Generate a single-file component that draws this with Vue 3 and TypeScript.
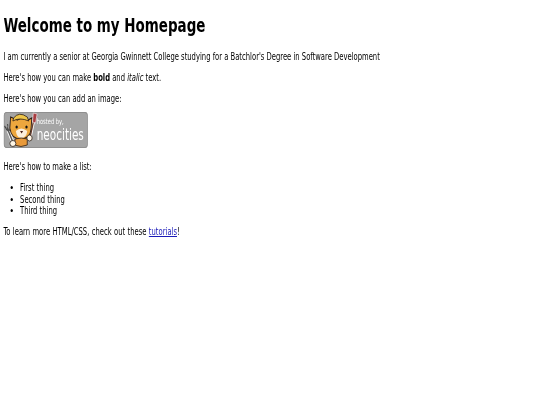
<script setup lang="ts">
const items: string[] = ['First thing', 'Second thing', 'Third thing']
</script>

<template>
  <main class="page">
    <h1>Welcome to my Homepage</h1>
    <p>I am currently a senior at Georgia Gwinnett College studying for a Batchlor's Degree in Software Development</p>
    <p>Here's how you can make <strong>bold</strong> and <em>italic</em> text.</p>
    <p>Here's how you can add an image:</p>
    <div class="badge">
      <svg class="cat" viewBox="0 0 52 36" width="52" height="36" aria-hidden="true">
        <path d="M41 3 L34 28" stroke="#fff" stroke-width="4" fill="none" />
        <path d="M41 3 L34 28" stroke="#6d4030" stroke-width="1.800" fill="none" />
        <path d="M39 1 L44 2 L42 11 L38 10 Z" fill="#a83c40" stroke="#fff" stroke-width=".6" />
        <path d="M4 15 L12 30" stroke="#fff" stroke-width="4" fill="none" />
        <path d="M4 15 L12 30" stroke="#555" stroke-width="1.800" fill="none" />
        <path d="M1 14 L5 19 M5 12 L6 18 M10 14 L7 19" stroke="#444" stroke-width="1.300" fill="none" />
        <path d="M8 16 L9 5 L18 8 Q25 5 32 8 L37 6 L36 17 Q35 27 22 27 Q10 27 8 16 Z" fill="#eda73e" stroke="#2c1e16" stroke-width="1.200" />
        <path d="M13 6 Q20 -1 31 5 L33 9 Q21 5 12 9 Z" fill="#eec54a" stroke="#2c1e16" stroke-width=".9" />
        <path d="M16 19 Q23 14 31 19 Q30 26 23 26 Q17 26 16 19 Z" fill="#fbeedb" />
        <circle cx="17" cy="15" r="1.500" fill="#111" />
        <circle cx="30" cy="15" r="1.500" fill="#111" />
        <path d="M21.500 19 L25.500 19 L23.500 21.500 Z" fill="#4a2018" />
        <path d="M15 27 Q23 25 31 27 L31 33 Q23 36 14 33 Z" fill="#e99a3a" stroke="#2c1e16" stroke-width=".9" />
        <ellipse cx="12" cy="31.500" rx="4" ry="3" fill="#fff6e6" stroke="#2c1e16" stroke-width=".9" />
        <ellipse cx="34" cy="26" rx="3.500" ry="3" fill="#fff6e6" stroke="#2c1e16" stroke-width=".9" />
      </svg>
      <div class="badge-text">
        <span class="hosted">hosted by,</span>
        <span class="neo">neocities</span>
      </div>
    </div>
    <p>Here's how to make a list:</p>
    <ul>
      <li v-for="item in items" :key="item">{{ item }}</li>
    </ul>
    <p class="last">To learn more HTML/CSS, check out these <a href="#">tutorials</a>!</p>
  </main>
</template>

<style scoped>
.page {
  box-sizing: border-box;
  width: 713px;
  padding: 0 4.500px;
  font-family: "DejaVu Sans Condensed", "DejaVu Sans", sans-serif;
  font-size: 10px;
  line-height: 11.6px;
  color: #000;
  transform: scaleX(0.757);
  transform-origin: left top;
  filter: blur(0.25px);
}
h1 {
  margin: 0 0 13.500px;
  padding-top: 14px;
  font-size: 19.750px;
  line-height: 23px;
  font-weight: 700;
}
p {
  margin: 0 0 9.600px;
}
.badge {
  display: flex;
  width: 111px;
  height: 36px;
  margin-top: -2px;
  margin-bottom: 13px;
  background: #a5a5a5;
  border-radius: 4px;
  box-shadow: inset 0 0 0 1px #8f8f8f;
  overflow: hidden;
}
.cat {
  flex: none;
}
.badge-text {
  display: flex;
  flex-direction: column;
  margin-left: -8px;
  padding-top: 6px;
  color: #fff;
}
.hosted {
  font-size: 7.500px;
  line-height: 8px;
}
.neo {
  font-size: 15.400px;
  line-height: 18px;
}
ul {
  margin: 0 0 9px;
  padding: 0 0 0 22px;
}
.last {
  word-spacing: 0.3px;
}
a {
  color: #1a1ab8;
}
</style>

<style>
html,
body {
  background: #fff;
  overflow: hidden;
}
</style>
